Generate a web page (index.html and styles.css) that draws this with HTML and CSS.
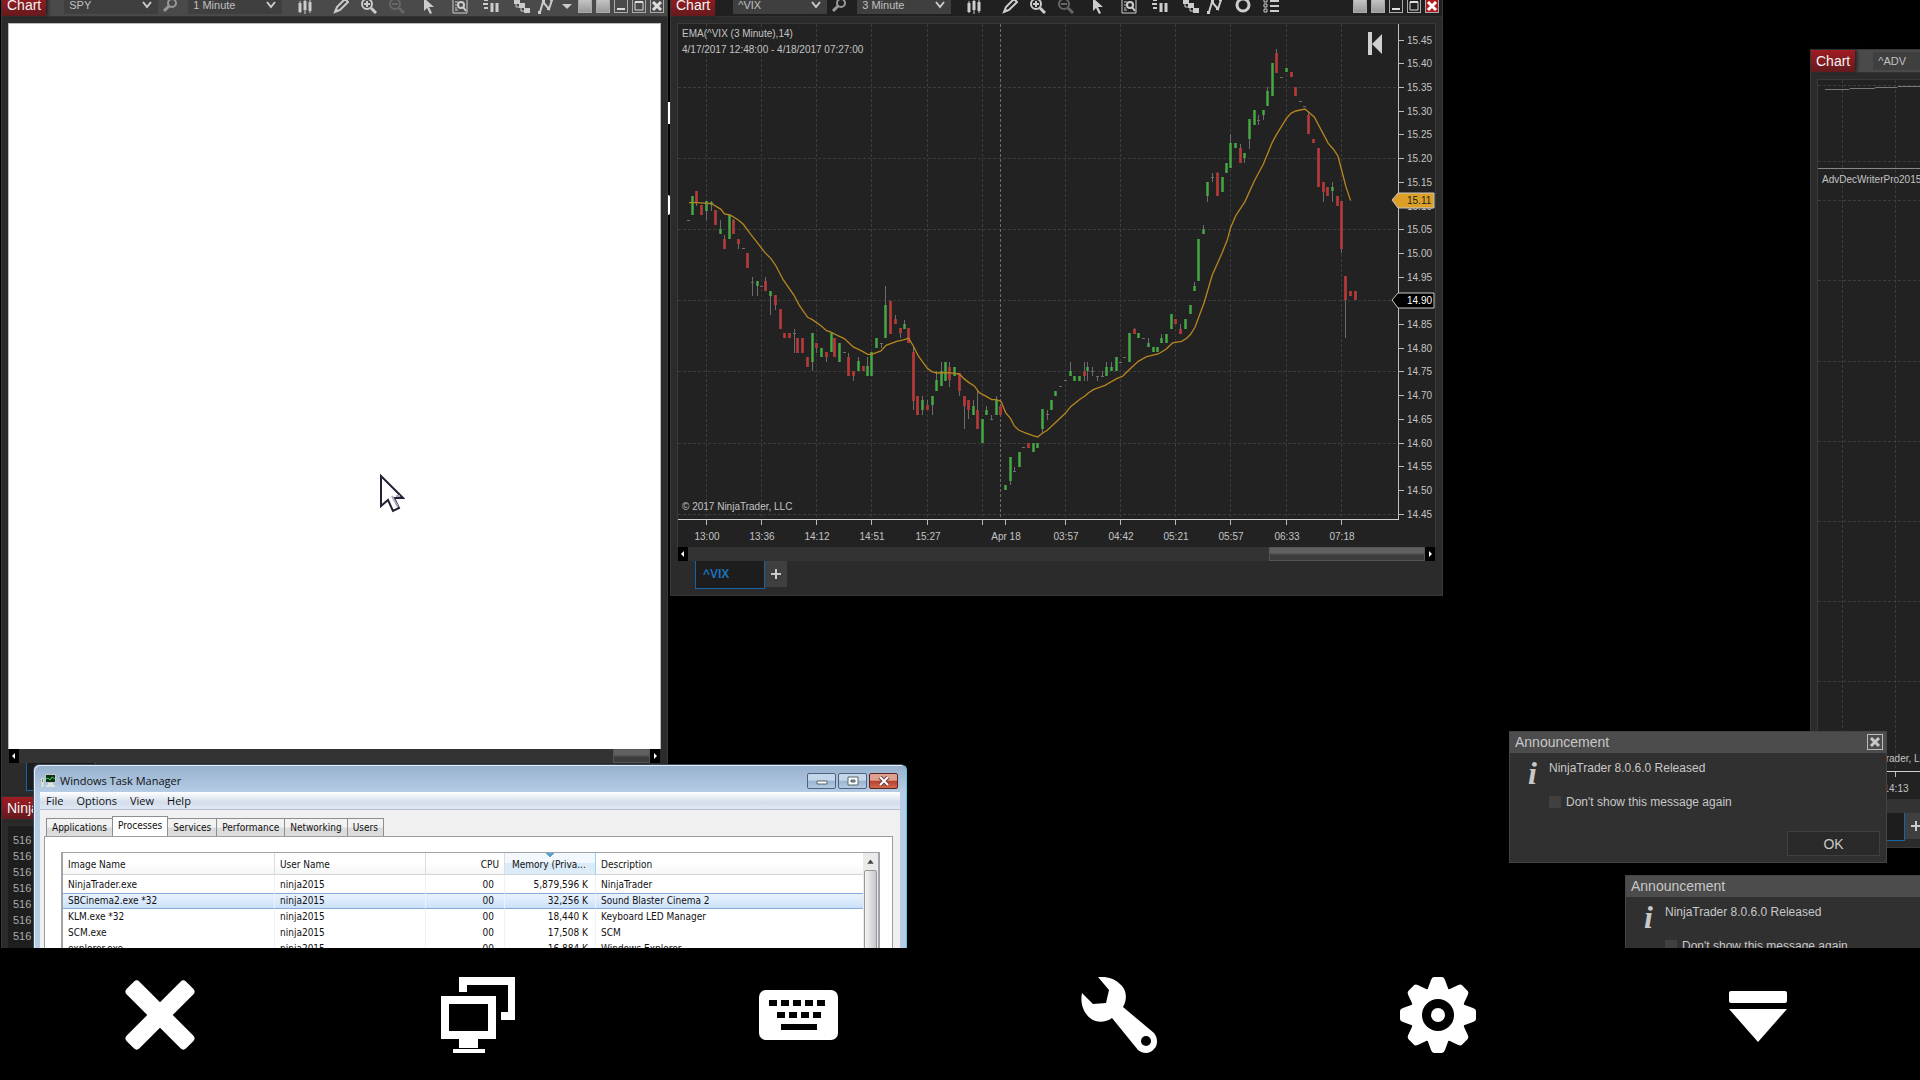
FILE: index.html
```html
<!DOCTYPE html>
<html lang="en">
<head>
    <meta charset="UTF-8">
    <meta name="viewport" content="width=device-width, initial-scale=1.0">
    <title>Remote Desktop</title>
    <link rel="stylesheet" href="styles.css">
</head>
<body>
    <svg class="sprite" aria-hidden="true">
        <symbol id="i-chevron" viewBox="0 0 10 8"><path d="M1 1L5 6L9 1" fill="none" stroke="currentColor" stroke-width="2"/></symbol>
        <symbol id="i-search" viewBox="0 0 16 16"><circle cx="10" cy="6" r="4" fill="none" stroke="currentColor" stroke-width="2"/><path d="M7 9L2 14" stroke="currentColor" stroke-width="3"/></symbol>
        <symbol id="i-bars" viewBox="0 0 16 16"><path d="M3 3V15M8 1V16M13 2V15" stroke="currentColor"/><path d="M3 5V14M8 3V12M13 4V13" stroke="currentColor" stroke-width="3"/></symbol>
        <symbol id="i-pencil" viewBox="0 0 16 16"><path d="M2 14L4 9L12 1L15 4L7 12Z" fill="none" stroke="currentColor" stroke-width="2"/><path d="M1 15L3 10L6 13Z" fill="currentColor"/></symbol>
        <symbol id="i-zoomin" viewBox="0 0 16 16"><circle cx="6" cy="6" r="5" fill="none" stroke="currentColor" stroke-width="2"/><path d="M3 6H9M6 3V9" stroke="currentColor" stroke-width="2"/><path d="M10 10L15 15" stroke="currentColor" stroke-width="3"/></symbol>
        <symbol id="i-zoomout" viewBox="0 0 16 16"><circle cx="6" cy="6" r="5" fill="none" stroke="currentColor" stroke-width="2"/><path d="M3 6H9" stroke="currentColor" stroke-width="2"/><path d="M10 10L15 15" stroke="currentColor" stroke-width="3"/></symbol>
        <symbol id="i-cursor" viewBox="0 0 16 16"><path d="M3 0V13L6 10L9 16L11 15L8 9H13Z" fill="currentColor"/></symbol>
        <symbol id="i-databox" viewBox="0 0 16 16"><path d="M1 1H15V15H1Z" fill="none" stroke="currentColor"/><path d="M3 4H6M3 7H5M3 10H5M3 12H6" stroke="currentColor"/><circle cx="9" cy="7" r="3" fill="none" stroke="currentColor" stroke-width="2"/><path d="M11 9L14 13" stroke="currentColor" stroke-width="2"/></symbol>
        <symbol id="i-trader" viewBox="0 0 16 16"><path d="M1 2H5M0 6H5M1 10H5" stroke="currentColor" stroke-width="2"/><path d="M9 5V14M14 5V14" stroke="currentColor" stroke-width="3"/></symbol>
        <symbol id="i-strategy" viewBox="0 0 16 16"><path d="M0 1H6V6H0ZM5 5H11V10H5ZM10 10H16V15H10Z" fill="currentColor"/><path d="M2 6V9H5M7 10V13H10" fill="none" stroke="currentColor"/></symbol>
        <symbol id="i-line" viewBox="0 0 16 16"><path d="M2 14L5 4L11 11L14 2" fill="none" stroke="currentColor" stroke-width="2"/><path d="M0 13H3V16H0ZM4 2H7V5H4ZM9 9H12V12H9ZM12 0H15V3H12Z" fill="currentColor"/></symbol>
        <symbol id="i-down" viewBox="0 0 10 16"><path d="M0 6H10L5 11Z" fill="currentColor"/></symbol>
        <symbol id="i-ring" viewBox="0 0 16 16"><circle cx="8" cy="7" r="6" fill="none" stroke="currentColor" stroke-width="3"/></symbol>
        <symbol id="i-list" viewBox="0 0 16 16"><path d="M1 1H4V4H1ZM1 6H4V9H1ZM1 11H4V14H1Z" fill="none" stroke="currentColor"/><path d="M7 3H16M7 8H16M7 13H16" stroke="currentColor" stroke-width="2"/></symbol>
        <symbol id="i-min" viewBox="0 0 12 12"><path d="M2 9H10" stroke="currentColor" stroke-width="2"/></symbol>
        <symbol id="i-max" viewBox="0 0 12 12"><path d="M2 2H10V10H2Z" fill="none" stroke="currentColor"/><path d="M2 2H10" stroke="currentColor" stroke-width="2"/></symbol>
        <symbol id="i-x" viewBox="0 0 12 12"><path d="M2 2L10 10M10 2L2 10" stroke="currentColor" stroke-width="3"/></symbol>
        <symbol id="i-left" viewBox="0 0 10 14"><path d="M3 7L6 4V10Z" fill="currentColor"/></symbol>
        <symbol id="i-right" viewBox="0 0 10 14"><path d="M7 7L4 4V10Z" fill="currentColor"/></symbol>
    </svg>

    <main class="desktop">
        <!-- SPY chart -->
        <section class="window window-spy" aria-label="SPY chart">
            <header class="titlebar">
                <span class="badge">Chart</span>
                <label class="picker"><select aria-label="Instrument"><option>SPY</option></select><svg><use href="#i-chevron"/></svg></label>
                <button class="tool search" aria-label="Search"><svg><use href="#i-search"/></svg></button>
                <label class="picker"><select aria-label="Interval"><option>1 Minute</option></select><svg><use href="#i-chevron"/></svg></label>
                <div class="tools">
                    <div class="group"><button class="tool" aria-label="Chart style"><svg><use href="#i-bars"/></svg></button></div>
                    <div class="group draw">
                        <button class="tool" aria-label="Draw"><svg><use href="#i-pencil"/></svg></button>
                        <button class="tool" aria-label="Zoom in"><svg><use href="#i-zoomin"/></svg></button>
                        <button class="tool" aria-label="Zoom out" disabled><svg><use href="#i-zoomout"/></svg></button>
                    </div>
                    <div class="group view">
                        <button class="tool" aria-label="Cursor"><svg><use href="#i-cursor"/></svg></button>
                        <button class="tool" aria-label="Data box"><svg><use href="#i-databox"/></svg></button>
                        <button class="tool" aria-label="Chart trader"><svg><use href="#i-trader"/></svg></button>
                        <button class="tool" aria-label="Data series"><svg><use href="#i-strategy"/></svg></button>
                    </div>
                    <div class="group more">
                        <button class="tool" aria-label="Indicators"><svg><use href="#i-line"/></svg></button>
                        <button class="tool narrow" aria-label="More"><svg><use href="#i-down"/></svg></button>
                    </div>
                </div>
                <div class="controls">
                    <button class="link" aria-label="Instrument link"></button>
                    <button class="link" aria-label="Interval link"></button>
                    <button aria-label="Minimize"><svg><use href="#i-min"/></svg></button>
                    <button aria-label="Maximize"><svg><use href="#i-max"/></svg></button>
                    <button aria-label="Close"><svg><use href="#i-x"/></svg></button>
                </div>
            </header>
            <div class="panel blank"></div>
            <div class="scroll">
                <button aria-label="Scroll left"><svg><use href="#i-left"/></svg></button>
                <div class="track"><div class="thumb short"></div></div>
                <button aria-label="Scroll right"><svg><use href="#i-right"/></svg></button>
            </div>
            <div class="tabs"><button class="tab" aria-label="Chart tab"></button></div>
        </section>

        <i class="behind bar"></i>
        <i class="behind curve"></i>

        <!-- ^VIX chart -->
        <section class="window window-vix" aria-label="VIX chart">
            <header class="titlebar">
                <span class="badge">Chart</span>
                <label class="picker"><select aria-label="Instrument"><option>^VIX</option></select><svg><use href="#i-chevron"/></svg></label>
                <button class="tool search" aria-label="Search"><svg><use href="#i-search"/></svg></button>
                <label class="picker"><select aria-label="Interval"><option>3 Minute</option></select><svg><use href="#i-chevron"/></svg></label>
                <div class="tools">
                    <div class="group"><button class="tool" aria-label="Chart style"><svg><use href="#i-bars"/></svg></button></div>
                    <div class="group draw">
                        <button class="tool" aria-label="Draw"><svg><use href="#i-pencil"/></svg></button>
                        <button class="tool" aria-label="Zoom in"><svg><use href="#i-zoomin"/></svg></button>
                        <button class="tool" aria-label="Zoom out" disabled><svg><use href="#i-zoomout"/></svg></button>
                    </div>
                    <div class="group view">
                        <button class="tool" aria-label="Cursor"><svg><use href="#i-cursor"/></svg></button>
                        <button class="tool" aria-label="Data box"><svg><use href="#i-databox"/></svg></button>
                        <button class="tool" aria-label="Chart trader"><svg><use href="#i-trader"/></svg></button>
                        <button class="tool" aria-label="Data series"><svg><use href="#i-strategy"/></svg></button>
                    </div>
                    <div class="group">
                        <button class="tool" aria-label="Indicators"><svg><use href="#i-line"/></svg></button>
                        <button class="tool" aria-label="Strategies"><svg><use href="#i-ring"/></svg></button>
                        <button class="tool" aria-label="Properties"><svg><use href="#i-list"/></svg></button>
                    </div>
                </div>
                <div class="controls">
                    <button class="link" aria-label="Instrument link"></button>
                    <button class="link" aria-label="Interval link"></button>
                    <button aria-label="Minimize"><svg><use href="#i-min"/></svg></button>
                    <button aria-label="Maximize"><svg><use href="#i-max"/></svg></button>
                    <button class="close" aria-label="Close"><svg><use href="#i-x"/></svg></button>
                </div>
            </header>
            <div class="panel"><svg id="vix-chart" class="chart" viewBox="0 0 757 523"></svg></div>
            <div class="scroll">
                <button aria-label="Scroll left"><svg><use href="#i-left"/></svg></button>
                <div class="track"><div class="thumb"></div></div>
                <button aria-label="Scroll right"><svg><use href="#i-right"/></svg></button>
            </div>
            <div class="tabs">
                <button class="tab">^VIX</button>
                <button class="add" aria-label="Add tab"><svg viewBox="0 0 12 12"><path d="M1 6H11M6 1V11" stroke="currentColor" stroke-width="2"/></svg></button>
            </div>
        </section>

        <!-- ^ADV chart -->
        <section class="window window-adv" aria-label="ADV chart">
            <header class="titlebar">
                <span class="badge">Chart</span>
                <label class="picker"><select aria-label="Instrument"><option>^ADV</option></select><svg><use href="#i-chevron"/></svg></label>
            </header>
            <div class="panel"><svg id="adv-chart" class="chart" viewBox="0 0 240 719"></svg></div>
            <div class="scroll"></div>
            <div class="tabs">
                <button class="tab" aria-label="Chart tab"></button>
                <button class="add" aria-label="Add tab"><svg viewBox="0 0 12 12"><path d="M1 6H11M6 1V11" stroke="currentColor" stroke-width="2"/></svg></button>
            </div>
        </section>

        <!-- NinjaTrader log -->
        <section class="window window-ninja" aria-label="Ninja">
            <header class="titlebar"><span class="badge">Ninja</span></header>
            <ul class="log">
                <li>516</li><li>516</li><li>516</li><li>516</li><li>516</li><li>516</li><li>516</li>
            </ul>
        </section>

        <!-- Task manager -->
        <section class="taskmgr" aria-label="Windows Task Manager">
            <header class="tm-title">
                <svg class="tm-icon" viewBox="0 0 16 14">
                    <path d="M0 4H3V13H0Z" fill="#d8dcd8"/><path d="M1 5H2V8H1Z" fill="#3fae3f"/>
                    <path d="M4 0H15V9H4Z" fill="#c4c8c8"/><path d="M5 1H14V8H5Z" fill="#123018"/>
                    <path d="M5 5L7 4L9 6L11 3L14 5" stroke="#38d848" fill="none"/><path d="M7 9H12V11H14V13H5V11H7Z" fill="#dfe3e3"/>
                </svg>
                <h1>Windows Task Manager</h1>
                <div class="tm-controls">
                    <button aria-label="Minimize"><svg viewBox="0 0 14 10"><path d="M2 5H12V8H2Z" fill="#fff" stroke="#566"/></svg></button>
                    <button aria-label="Maximize"><svg viewBox="0 0 14 10"><path d="M2 1H12V9H2Z" fill="#fff" stroke="#566"/><path d="M5 4H9V6H5Z" fill="#7f9bb8" stroke="#566"/></svg></button>
                    <button class="close" aria-label="Close"><svg viewBox="0 0 14 10"><path d="M3 1L11 9M11 1L3 9" stroke="#6b3a36" stroke-width="4"/><path d="M3 1L11 9M11 1L3 9" stroke="#fff" stroke-width="2"/></svg></button>
                </div>
            </header>
            <div class="tm-client">
                <nav class="tm-menu">
                    <button>File</button><button>Options</button><button>View</button><button>Help</button>
                </nav>
                <div class="tm-tabs" role="tablist">
                    <button role="tab">Applications</button>
                    <button role="tab" class="active" aria-selected="true">Processes</button>
                    <button role="tab">Services</button>
                    <button role="tab">Performance</button>
                    <button role="tab">Networking</button>
                    <button role="tab">Users</button>
                </div>
                <div class="tm-page">
                    <div class="tm-list">
                        <table>
                            <colgroup><col class="c-image"><col class="c-user"><col class="c-cpu"><col class="c-mem"><col></colgroup>
                            <thead>
                                <tr><th>Image Name</th><th>User Name</th><th class="cpu">CPU</th><th class="sorted">Memory (Priva...</th><th>Description</th></tr>
                            </thead>
                            <tbody>
                                <tr><td>NinjaTrader.exe</td><td>ninja2015</td><td>00</td><td>5,879,596 K</td><td>NinjaTrader</td></tr>
                                <tr class="selected"><td>SBCinema2.exe *32</td><td>ninja2015</td><td>00</td><td>32,256 K</td><td>Sound Blaster Cinema 2</td></tr>
                                <tr><td>KLM.exe *32</td><td>ninja2015</td><td>00</td><td>18,440 K</td><td>Keyboard LED Manager</td></tr>
                                <tr><td>SCM.exe</td><td>ninja2015</td><td>00</td><td>17,508 K</td><td>SCM</td></tr>
                                <tr><td>explorer.exe</td><td>ninja2015</td><td>00</td><td>16,884 K</td><td>Windows Explorer</td></tr>
                            </tbody>
                        </table>
                        <div class="tm-scroll">
                            <button aria-label="Scroll up"><svg viewBox="0 0 14 16"><path d="M4 10L7 6L10 10Z" fill="#444"/></svg></button>
                            <div class="tm-thumb"></div>
                        </div>
                    </div>
                </div>
            </div>
        </section>

        <!-- Announcements -->
        <section class="dialog dialog-front">
            <header><h2>Announcement</h2><button class="dialog-close" aria-label="Close"><svg viewBox="0 0 12 12"><use href="#i-x"/></svg></button></header>
            <div class="dialog-body">
                <span class="info">i</span>
                <div class="message">
                    <p>NinjaTrader 8.0.6.0 Released</p>
                    <label><input type="checkbox">Don't show this message again</label>
                </div>
            </div>
            <footer><button>OK</button></footer>
        </section>
        <section class="dialog dialog-back">
            <header><h2>Announcement</h2></header>
            <div class="dialog-body">
                <span class="info">i</span>
                <div class="message">
                    <p>NinjaTrader 8.0.6.0 Released</p>
                    <label><input type="checkbox">Don't show this message again</label>
                </div>
            </div>
        </section>

        <svg class="pointer" viewBox="0 0 26 40">
            <path d="M2 2V32L9 26L14 37L20 34L15 24H24Z" fill="#fff" stroke="#223" stroke-width="2"/>
            <path d="M13 22L19 33M17 22H21" stroke="#aab" stroke-width="2"/>
        </svg>
    </main>

    <nav class="toolbar">
        <button aria-label="Disconnect">
            <svg width="76" height="76" viewBox="0 0 76 76" fill="#fff"><rect x="-4" y="29" width="84" height="18" rx="4" transform="rotate(45 38 38)"/><rect x="-4" y="29" width="84" height="18" rx="4" transform="rotate(-45 38 38)"/></svg>
        </button>
        <button aria-label="Monitors">
            <svg width="76" height="76" viewBox="0 0 76 76" fill="#fff"><path d="M18 0H74V43H60V35H67V8H26V15H18Z"/><path fill-rule="evenodd" d="M0 19H55V62H37V71H18V62H0ZM8 27V54H47V27Z"/><path d="M12 72H44V76H12Z"/></svg>
        </button>
        <button aria-label="Keyboard">
            <svg width="80" height="76" viewBox="0 0 80 76"><rect x="0" y="13" width="79" height="50" rx="7" fill="#fff"/><path d="M10 23h8v6h-8zM22 23h8v6h-8zM34 23h8v6h-8zM46 23h8v6h-8zM58 23h8v6h-8zM18 35h8v6h-8zM30 35h8v6h-8zM42 35h8v6h-8zM54 35h8v6h-8zM22 47h36v6H22z"/></svg>
        </button>
        <button aria-label="Tools">
            <svg width="76" height="76" viewBox="0 0 76 76"><path fill="#fff" d="M17 0C26 -1 35 2 41 9C46 15 46 23 42 30L73 56C77 61 77 68 73 72C69 77 62 77 57 73L31 41C24 46 15 46 9 41C2 35 -1 26 1 16L12 27L25 26L28 13Z"/><circle cx="65" cy="64" r="5"/></svg>
        </button>
        <button aria-label="Settings">
            <svg width="76" height="76" viewBox="-38 -38 76 76" fill="#fff">
                <circle r="28"/>
                <path id="tooth" d="M-11 -24L-7 -35Q-6 -38 -4 -38H4Q6 -38 7 -35L11 -24Z"/>
                <use href="#tooth" transform="rotate(45)"/><use href="#tooth" transform="rotate(90)"/><use href="#tooth" transform="rotate(135)"/><use href="#tooth" transform="rotate(180)"/><use href="#tooth" transform="rotate(225)"/><use href="#tooth" transform="rotate(270)"/><use href="#tooth" transform="rotate(315)"/>
                <circle r="16" fill="#000"/><circle r="7"/>
            </svg>
        </button>
        <button aria-label="Hide toolbar">
            <svg width="58" height="76" viewBox="0 0 58 76" fill="#fff"><rect y="14" width="58" height="12" rx="2"/><path d="M0 32H58L29 65Z"/></svg>
        </button>
    </nav>

    <script src="script.js"></script>
</body>
</html>
```
FILE: styles.css
```css
* {
    box-sizing: border-box;
}

body, html {
    margin: 0;
    height: 100%;
    background-color: #000;
    font-family: "Liberation Sans", Arial, sans-serif;
    font-size: 11px;
    color: #ccc;
}

body {
    display: flex;
    flex-direction: column;
    overflow: hidden;
}

button, select, input {
    font: inherit;
    color: inherit;
    margin: 0;
    padding: 0;
    border: none;
    border-radius: 0;
    background: none;
}

h1, h2, p, ul {
    margin: 0;
    padding: 0;
    font-weight: normal;
}

.sprite {
    position: absolute;
    width: 0;
    height: 0;
}

.desktop {
    position: relative;
    flex: 1;
    overflow: hidden;
}

/* Chart windows */
.window {
    position: absolute;
    display: flex;
    flex-direction: column;
    background-color: #2b2b2b;
    border: 1px solid #383838;
}

.window-spy {
    left: 1px;
    top: -7px;
    width: 667px;
    height: 805px;
}

.window-vix {
    left: 670px;
    top: -7px;
    width: 773px;
    height: 603px;
}

.window-adv {
    left: 1810px;
    top: 49px;
    width: 256px;
    height: 799px;
}

.window-ninja {
    left: 1px;
    top: 796px;
    width: 667px;
    height: 200px;
}

.titlebar {
    display: flex;
    align-items: center;
    height: 22px;
    margin-bottom: 7px;
    background-color: #4a4a4a;
    box-shadow: 0 1px 0 #333;
}

.window-vix .titlebar {
    background-color: #202020;
}

.badge {
    align-self: stretch;
    padding: 0 5px;
    margin-right: 18px;
    background: linear-gradient(#a01c22, #641a1e);
    color: #f4f4f4;
    font-size: 14px;
    line-height: 22px;
    box-shadow: 2px 0 3px #222;
}

.picker {
    position: relative;
    flex: none;
    width: 94px;
    height: 18px;
    background-color: #3f3f3f;
}

.picker select {
    appearance: none;
    display: block;
    width: 100%;
    height: 100%;
    padding-left: 5px;
    color: #c0c0c0;
}

.picker svg {
    position: absolute;
    right: 6px;
    top: 5px;
    width: 10px;
    height: 8px;
    pointer-events: none;
}

.tool {
    flex: none;
    width: 16px;
    height: 16px;
}

.tool.narrow {
    width: 10px;
}

.tool svg {
    display: block;
    width: 100%;
    height: 16px;
}

.tool:disabled {
    color: #666;
}

.search {
    margin: 0 10px 0 4px;
    color: #999;
}

.tools, .group {
    display: flex;
    gap: 12px;
}

.tools {
    gap: 0;
    margin-left: 15px;
    padding-top: 2px;
}

.group {
    margin-right: 8px;
}

.group.draw {
    margin: 0 16px 0 12px;
}

.group.view {
    gap: 15px;
}

.group.more {
    gap: 8px;
    margin-right: 0;
}

.controls {
    display: flex;
    gap: 4px;
    align-self: flex-end;
    margin: 0 3px 3px auto;
}

.controls button {
    width: 14px;
    height: 14px;
    border: 1px solid #aaa;
    color: #ddd;
}

.controls svg {
    display: block;
    width: 12px;
    height: 12px;
}

.controls .link {
    background: linear-gradient(#c4c4c4, #999);
}

.controls .close {
    background-color: #b01c22;
    color: #fff;
}

.panel {
    flex: 1;
    min-height: 0;
    margin: 0 6px;
    border: 1px solid #3a3a3a;
    border-bottom: none;
    background-color: #222;
}

.panel.blank {
    background-color: #fff;
    border-color: #bbb;
}

.chart {
    display: block;
    width: 100%;
    font-size: 10px;
}

.scroll {
    display: flex;
    height: 14px;
    margin: 0 7px;
    background-color: #333;
}

.scroll button {
    width: 10px;
    height: 14px;
    background-color: #000;
    color: #fff;
}

.scroll svg {
    display: block;
    width: 10px;
    height: 14px;
}

.track {
    display: flex;
    flex: 1;
    justify-content: flex-end;
}

.thumb {
    width: 156px;
    border: 1px solid #555;
    background: linear-gradient(#606060 40%, #3c3c3c 60%);
}

.thumb.short {
    width: 37px;
}

.tabs {
    display: flex;
    align-items: flex-start;
    height: 34px;
    margin-left: 24px;
}

.tab {
    width: 70px;
    height: 28px;
    padding: 0 0 2px 7px;
    border: 1px solid #1464a8;
    border-top: none;
    background-color: #1d1d1d;
    color: #1c70b8;
    font-size: 12px;
    font-weight: bold;
    text-align: left;
}

.add {
    display: grid;
    place-items: center;
    width: 22px;
    height: 26px;
    background-color: #3f3f3f;
}

.add svg {
    width: 12px;
    height: 12px;
}

.log {
    list-style: none;
    flex: 1;
    margin: 0 6px;
    padding: 6px 5px;
    background-color: #1e1e1e;
    color: #aaa;
    line-height: 16px;
}

/* Edges of a window hidden behind the charts */
.behind {
    position: absolute;
    left: 668px;
    width: 2px;
    background-color: #fff;
}

.behind.bar {
    top: 102px;
    height: 22px;
}

.behind.curve {
    top: 195px;
    height: 20px;
    border-radius: 0 2px 2px 0;
}

/* Task manager */
.taskmgr {
    position: absolute;
    left: 33px;
    top: 764px;
    width: 874px;
    height: 300px;
    padding: 0 6px;
    border: 1px solid #3a4654;
    border-right-color: #4fc8ec;
    border-radius: 6px 6px 0 0;
    background: linear-gradient(#96b0cc, #b7cde6 28px);
    box-shadow: inset 1px 1px 0 #e4eef8;
    color: #111;
    font-family: "DejaVu Sans Condensed", "DejaVu Sans", sans-serif;
    font-size: 10px;
}

.tm-title {
    display: flex;
    align-items: center;
    height: 27px;
    padding-top: 4px;
}

.tm-icon {
    width: 16px;
    height: 14px;
    margin: 0 3px 0 1px;
}

.tm-title h1 {
    font-family: "Open Sans", sans-serif;
    font-size: 11px;
}

.tm-controls {
    display: flex;
    gap: 2px;
    margin: 0 2px 0 auto;
}

.tm-controls button {
    display: grid;
    place-items: center;
    width: 29px;
    height: 16px;
    border: 1px solid #4c6480;
    border-radius: 2px;
    background: linear-gradient(#c4d6ea 45%, #9ab4d0 50%, #b4cae2);
}

.tm-controls .close {
    border-color: #5a2420;
    background: linear-gradient(#e0a090 45%, #b8402c 50%, #d06850);
}

.tm-controls svg {
    width: 14px;
    height: 10px;
}

.tm-client {
    height: 270px;
    background-color: #f0f0f0;
}

.tm-menu {
    display: flex;
    gap: 13px;
    height: 18px;
    padding-left: 6px;
    border-bottom: 1px solid #b6bccc;
    background: linear-gradient(#fff, #d4deec 60%, #dfe8f4);
    font-family: "Open Sans", sans-serif;
    font-size: 11px;
}

.tm-tabs {
    display: flex;
    align-items: flex-end;
    height: 26px;
    padding-left: 6px;
}

.tm-tabs button {
    height: 18px;
    padding: 0 5px;
    border: 1px solid #8c8e94;
    border-bottom: none;
    margin-right: -1px;
    background: linear-gradient(#f2f2f2 45%, #dcdcdc 55%);
    white-space: nowrap;
}

.tm-tabs .active {
    z-index: 1;
    height: 20px;
    padding-bottom: 3px;
    background: #fff;
}

.tm-page {
    height: 300px;
    margin: 0 7px 0 4px;
    padding: 15px 12px 0 16px;
    border: 1px solid #9a9ca0;
    background-color: #fff;
}

.tm-list {
    display: flex;
    height: 280px;
    border: 2px solid #9fa3aa;
    border-width: 1px 2px;
}

table {
    flex: 1;
    align-self: flex-start;
    table-layout: fixed;
    border-collapse: separate;
    border-spacing: 0;
    white-space: nowrap;
}

.c-image { width: 212px; }
.c-user { width: 151px; }
.c-cpu { width: 79px; }
.c-mem { width: 91px; }

th, td {
    padding: 0 5px;
    border-right: 1px solid #edf3fa;
    text-align: left;
    font-weight: normal;
    overflow: hidden;
}

th {
    height: 22px;
    padding-top: 2px;
    border-right-color: #dedede;
    border-bottom: 1px solid #d5d5d5;
    background: linear-gradient(#fff 50%, #f4f5f6);
}

thead + tbody tr:first-child td {
    height: 18px;
    padding-top: 2px;
}

td {
    height: 16px;
    line-height: 14px;
}

th:last-child, td:last-child {
    border-right: none;
}

th.cpu, td:nth-child(3), td:nth-child(4) {
    text-align: right;
}

td:nth-child(3) {
    padding-right: 10px;
}

td:nth-child(4) {
    padding-right: 7px;
}

th.sorted {
    padding: 2px 4px 0 7px;
    border-right-color: #9fd4ee;
    background:
        conic-gradient(from -45deg at 50% 4px, #5aa4cc 90deg, transparent 0) center top / 8px 4px no-repeat,
        linear-gradient(#f2f8fd 45%, #dcebf8 50%);
}

.selected td {
    border-top: 1px solid #84acdd;
    border-bottom: 1px solid #84acdd;
    background: linear-gradient(#eaf3fe, #cbe1fa);
}

.tm-scroll {
    width: 15px;
    background-color: #eaeaea;
}

.tm-scroll button {
    display: block;
    width: 15px;
    height: 17px;
}

.tm-thumb {
    height: 200px;
    margin: 0 1px;
    border: 1px solid #979797;
    border-radius: 2px;
    background: linear-gradient(90deg, #f4f4f4, #c8c8cc);
}

/* Announcement dialogs */
.dialog {
    position: absolute;
    width: 378px;
    height: 132px;
    border: 1px solid #454545;
    background-color: #303030;
    display: flex;
    flex-direction: column;
    color: #c8c8c8;
}

.dialog-front {
    left: 1509px;
    top: 731px;
}

.dialog-back {
    left: 1625px;
    top: 875px;
}

.dialog header {
    display: flex;
    align-items: center;
    justify-content: space-between;
    height: 21px;
    padding: 0 3px 1px 5px;
    background-color: #4c4c4c;
}

.dialog h2 {
    font-size: 14px;
}

.dialog-close {
    display: grid;
    place-items: center;
    width: 16px;
    height: 16px;
    border: 1px solid #bbb;
}

.dialog-close svg {
    width: 12px;
    height: 12px;
}

.dialog-body {
    display: flex;
    flex: 1;
    padding: 8px 0 0 18px;
    font-size: 12px;
    line-height: 14px;
}

.info {
    width: 21px;
    font: italic bold 32px/24px "Liberation Serif", serif;
}

.message label {
    display: flex;
    align-items: center;
    gap: 5px;
    margin-top: 20px;
}

.message input {
    appearance: none;
    width: 12px;
    height: 12px;
    background-color: #404040;
}

.dialog footer {
    display: flex;
    justify-content: flex-end;
    padding: 0 6px 6px;
}

.dialog footer button {
    width: 93px;
    height: 25px;
    border: 1px solid #404040;
    background-color: #2a2a2a;
    font-size: 14px;
}

.pointer {
    position: absolute;
    left: 379px;
    top: 474px;
    width: 26px;
    height: 40px;
}

/* Remote session toolbar */
.toolbar {
    display: grid;
    grid-template-columns: repeat(6, 1fr);
    height: 132px;
    padding: 2px 2px 0 0;
    background-color: #000;
}

.toolbar button {
    display: grid;
    place-items: center;
}
```
FILE: script.js
```js
const NS = 'http://www.w3.org/2000/svg';

function add(parent, name, attrs, text) {
    const el = document.createElementNS(NS, name);
    for (const key in attrs) el.setAttribute(key, attrs[key]);
    if (text) el.textContent = text;
    parent.appendChild(el);
    return el;
}

function line(svg, x1, y1, x2, y2, stroke, dash) {
    add(svg, 'path', {
        d: `M${x1} ${y1}L${x2} ${y2}`, stroke, fill: 'none',
        'stroke-dasharray': dash || 'none', 'shape-rendering': 'crispEdges'
    });
}

function label(svg, x, y, text, anchor, fill) {
    add(svg, 'text', { x, y, fill: fill || '#c4c4c4', 'text-anchor': anchor || 'start' }, text);
}

// x, high, body top, body bottom, low, direction (u = up, d = down, n = flat); 3 units to a pixel
const candles = `
55 600 600 600 600 n,66 529 529 586 586 u,80 514 514 548 558 d,95 556 556 586 586 d,109 543 543 572 600 u,
123 543 545 556 572 u,137 571 571 614 614 d,151 601 628 643 643 u,163 644 656 686 686 d,177 586 586 657 657 u,
191 598 600 643 643 d,205 656 656 671 686 d,219 685 685 685 685 n,233 699 699 743 743 d,248 771 785 785 828 n,
262 784 784 797 828 u,274 799 799 799 799 n,287 771 784 813 813 d,302 813 813 827 885 u,316 825 826 856 870 d,
330 868 868 927 927 d,344 939 939 955 955 d,358 939 939 955 955 d,373 926 940 940 998 n,383 954 954 998 998 d,
398 954 954 998 998 d,412 1011 1011 1040 1040 d,426 939 939 1026 1054 u,440 968 968 983 998 d,454 983 983 1012 1012 u,
469 997 997 1012 1026 d,483 938 938 997 997 u,494 954 954 1011 1011 d,508 968 968 1026 1026 u,523 997 997 997 997 n,
536 998 1012 1068 1068 d,550 1054 1054 1068 1083 d,565 1011 1024 1054 1054 u,579 1039 1039 1054 1054 d,593 1011 1039 1068 1068 u,
604 997 997 1068 1068 u,619 954 954 983 983 u,633 968 968 968 983 n,647 799 854 955 955 u,661 842 842 941 941 d,
676 885 897 912 912 d,690 925 925 940 955 d,704 899 911 926 926 u,715 925 925 969 969 d,730 980 997 1142 1170 d,
743 1127 1127 1184 1184 d,757 1127 1141 1170 1184 u,772 1141 1155 1170 1170 d,786 1127 1127 1155 1184 u,800 1054 1081 1113 1113 u,
814 1026 1054 1099 1099 u,825 1025 1025 1083 1083 u,839 1026 1040 1081 1100 d,854 1040 1040 1068 1068 u,868 1060 1060 1114 1127 d,
882 1127 1127 1157 1228 d,896 1141 1141 1170 1198 d,911 1141 1157 1184 1184 u,922 1113 1170 1227 1227 d,936 1198 1198 1269 1269 u,
950 1157 1170 1184 1184 u,965 1184 1197 1197 1197 n,979 1128 1141 1184 1184 u,992 1157 1157 1184 1184 d,1007 1396 1396 1411 1411 u,
1021 1311 1311 1382 1396 u,1033 1341 1354 1354 1354 n,1047 1297 1297 1340 1340 u,1061 1282 1282 1282 1282 n,1075 1269 1269 1284 1284 d,
1089 1269 1269 1297 1297 u,1103 1269 1269 1284 1284 u,1117 1168 1168 1227 1240 u,1132 1170 1183 1183 1200 n,1143 1140 1140 1170 1170 u,
1157 1112 1112 1127 1127 u,1171 1099 1099 1099 1099 n,1186 1081 1081 1081 1081 n,1200 1026 1054 1068 1068 u,1214 1068 1068 1082 1082 u,
1228 1068 1068 1082 1082 u,1242 1026 1053 1068 1082 d,1253 1026 1040 1053 1082 u,1268 1040 1053 1053 1068 n,1282 1069 1069 1069 1083 n,
1296 1053 1068 1068 1068 n,1310 1026 1040 1068 1068 u,1324 1026 1040 1053 1053 u,1339 1011 1011 1053 1053 u,1352 1025 1025 1025 1025 n,
1364 1011 1011 1011 1011 n,1378 940 940 1025 1025 u,1393 925 927 941 941 d,1406 940 940 955 955 u,1421 955 955 955 955 n,
1435 955 968 982 982 u,1449 982 982 997 997 u,1463 982 982 997 997 u,1474 942 954 968 968 u,1489 941 941 968 968 u,
1503 883 883 926 926 u,1517 896 898 912 912 d,1531 912 927 941 941 d,1545 898 898 926 926 u,1560 855 855 883 883 u,
1573 785 797 812 812 u,1585 656 656 784 784 u,1599 614 628 643 643 u,1613 486 486 529 545 u,1627 458 471 471 487 n,
1642 455 458 529 529 d,1656 472 472 515 515 u,1670 430 430 458 458 u,1681 343 370 443 443 u,1696 370 370 384 384 u,
1710 372 384 430 430 d,1724 398 398 415 430 u,1738 298 298 357 386 u,1753 271 271 314 314 u,1766 286 299 299 314 n,
1780 271 271 286 300 u,1793 201 214 257 257 u,1807 129 129 229 229 u,1820 88 100 158 158 d,1834 172 172 172 172 n,
1849 143 143 157 157 u,1863 157 157 172 172 d,1877 200 200 229 229 d,1891 243 243 243 243 n,1903 257 257 257 257 n,
1916 276 286 342 342 d,1930 356 356 370 370 d,1945 385 385 500 500 d,1960 486 486 515 545 d,1973 500 500 529 529 d,
1988 487 500 514 545 u,2002 529 529 557 557 d,2013 543 543 686 700 d,2027 769 769 841 955 d,2041 812 812 827 827 d,
2055 812 812 841 841 d`.trim().split(',').map(row => row.trim().split(' '));

const ema = `57,548 80,548 125,551 153,568 163,582 180,585 205,600 220,613 240,640 262,668 285,698 303,716 318,738 340,780
372,826 388,856 413,892 427,899 450,915 470,932 485,937 505,948 523,956 550,981 575,993 593,1003 605,1003 633,993 648,976
680,964 700,960 716,955 730,978 745,1008 772,1045 786,1055 800,1059 835,1058 868,1062 882,1076 897,1088 913,1098 928,1118
950,1130 965,1139 979,1139 993,1144 1007,1178 1022,1196 1033,1218 1047,1231 1070,1240 1089,1247 1103,1251 1117,1240
1132,1231 1186,1180 1202,1160 1230,1138 1244,1129 1255,1119 1270,1109 1305,1096 1340,1076 1358,1069 1380,1047 1405,1024
1430,1010 1465,1002 1488,988 1508,969 1535,964 1550,955 1562,943 1575,922 1602,850 1627,765 1656,700 1672,660 1682,623
1697,588 1725,545 1753,483 1780,433 1807,367 1820,343 1849,296 1863,280 1877,273 1905,267 1933,291 1975,370 1990,387
2004,408 2015,450 2028,500 2042,542`;

function drawVix() {
    const svg = document.getElementById('vix-chart');
    const px = u => Math.floor(u / 3) - 8;
    const py = v => Math.round(v / 3) - 4;
    const priceY = p => Math.round(15.7 + (15.45 - p) * 474) + 0.5;

    const times = [[28, '13:00'], [83, '13:36'], [138, '14:12'], [193, '14:51'], [249, '15:27'], [304, ''],
        [387, '03:57'], [442, '04:42'], [497, '05:21'], [552, '05:57'], [608, '06:33'], [663, '07:18']];

    for (const [x, text] of times) {
        line(svg, x + 0.5, 0, x + 0.5, 494, '#3c3c3c', '3 2');
        line(svg, x + 0.5, 495, x + 0.5, 501, '#bbb');
        if (text) label(svg, x + 1, 516, text, 'middle');
    }
    line(svg, 327.5, 495, 327.5, 501, '#bbb');
    label(svg, 328, 516, 'Apr 18', 'middle');

    for (let i = 0; i <= 20; i++) {
        const price = 15.45 - i * 0.05;
        const y = priceY(price);
        if (i % 3 === 2) line(svg, 0, y, 720, y, '#3c3c3c', '3 2');
        line(svg, 721, y, 726, y, '#bbb');
        label(svg, 729, y + 3.5, price.toFixed(2));
    }
    line(svg, 322.5, 0, 322.5, 494, '#6a6a6a', '3 2');

    for (const [x, high, top, bottom, low, dir] of candles) {
        const cx = px(x);
        if (+low > +high) line(svg, cx + 0.5, py(high), cx + 0.5, py(low), '#6c6c6c');
        if (dir === 'n') {
            line(svg, cx - 1, py(top) + 0.5, cx + 2, py(top) + 0.5, '#6c6c6c');
            continue;
        }
        const height = py(bottom) - py(top);
        add(svg, 'rect', { x: cx - 1, y: py(top), width: 3, height, fill: dir === 'u' ? '#4a7c4a' : '#864040' });
        add(svg, 'rect', { x: cx, y: py(top), width: 1, height, fill: dir === 'u' ? '#30b830' : '#dc2828' });
    }

    add(svg, 'polyline', {
        points: ema, fill: 'none', stroke: '#b58520', 'stroke-width': 4,
        transform: 'translate(-8 -4) scale(0.3333)'
    });

    line(svg, 720.5, 0, 720.5, 496, '#c0c0c0');
    line(svg, 0, 495.5, 721, 495.5, '#d0d0d0');
    add(svg, 'path', { d: 'M690 8H694V31H690ZM704 10V30L694 20Z', fill: '#d0d0d0' });

    add(svg, 'path', { d: 'M714 176L720 169H756V184H720Z', fill: '#dca028', stroke: '#c8c8c8' });
    label(svg, 729, 180, '15.11', 'start', '#222');
    add(svg, 'path', { d: 'M714 276L720 269H756V284H720Z', fill: '#000', stroke: '#c8c8c8' });
    label(svg, 729, 280, '14.90', 'start', '#fff');

    label(svg, 4, 13, 'EMA(^VIX (3 Minute),14)');
    label(svg, 4, 29, '4/17/2017 12:48:00 - 4/18/2017 07:27:00');
    label(svg, 4, 486, '© 2017 NinjaTrader, LLC');
}

function drawAdv() {
    const svg = document.getElementById('adv-chart');
    for (const x of [24.5, 77.5, 130.5, 183.5]) {
        line(svg, x, 0, x, 690, '#3c3c3c', '3 2');
        line(svg, x, 692, x, 697, '#bbb');
    }
    for (const y of [5.5, 81.5, 120.5, 200.5, 281.5, 361.5, 441.5, 521.5, 601.5]) {
        line(svg, 0, y, 240, y, '#3c3c3c', '3 2');
    }
    add(svg, 'path', { d: 'M7 9.5H31L32 8.5H56L58 7.5H79L80 6.5H240', fill: 'none', stroke: '#777' });
    line(svg, 0, 88, 240, 88, '#888');
    line(svg, 0, 691.5, 240, 691.5, '#d0d0d0');
    label(svg, 4, 103, 'AdvDecWriterPro2015');
    label(svg, 4, 682, '© 2017 NinjaTrader, LLC');
    label(svg, 78, 712, '14:13', 'middle');
}

drawVix();
drawAdv();
```
